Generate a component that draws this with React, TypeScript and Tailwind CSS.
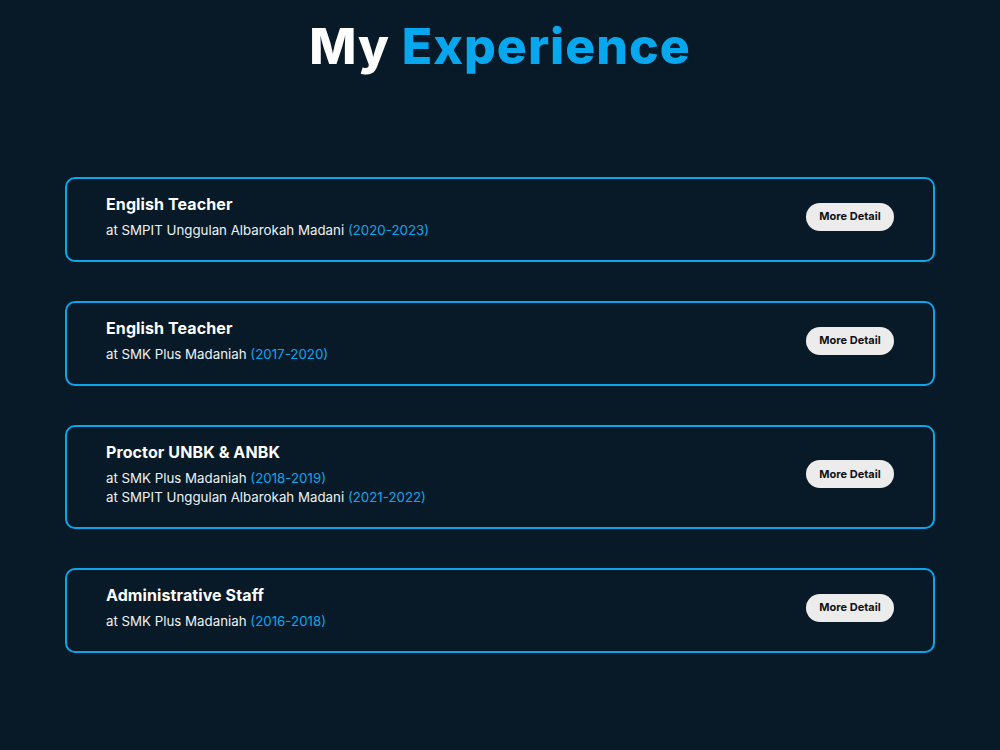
import React from "react";

type Place = { at: string; years: string };
type Job = { title: string; places: Place[] };

const jobs: Job[] = [
  { title: "English Teacher", places: [{ at: "at SMPIT Unggulan Albarokah Madani", years: "(2020-2023)" }] },
  { title: "English Teacher", places: [{ at: "at SMK Plus Madaniah", years: "(2017-2020)" }] },
  {
    title: "Proctor UNBK & ANBK",
    places: [
      { at: "at SMK Plus Madaniah", years: "(2018-2019)" },
      { at: "at SMPIT Unggulan Albarokah Madani", years: "(2021-2022)" },
    ],
  },
  { title: "Administrative Staff", places: [{ at: "at SMK Plus Madaniah", years: "(2016-2018)" }] },
];

function JobCard({ job }: { job: Job }) {
  return (
    <div className="flex items-center justify-between rounded-[10px] border-2 border-[#0aa6ec] pl-[39px] pr-[39px] pt-[13px] pb-[20px]">
      <div>
        <h3 className="text-[16px] font-bold leading-[24px] text-white tracking-[0.1px]">{job.title}</h3>
        <div className="mt-[5px]">
          {job.places.map((p, i) => (
            <p key={i} className="text-[13.3px] leading-[19px] text-[#eef2f5]">
              {p.at} <span className="text-[#0aa6ec]">{p.years}</span>
            </p>
          ))}
        </div>
      </div>
      <button className="h-[28px] w-[88px] rounded-full bg-[#ececec] text-[11px] font-bold text-[#111] mt-[1px]">
        More Detail
      </button>
    </div>
  );
}

export default function App() {
  return (
    <div
      className="min-h-[750px] w-full bg-[#081a28] px-[65px]"
      style={{ fontFamily: "Inter, 'Open Sans', sans-serif" }}
    >
      <h1 className="pt-[12px] text-center text-[50px] font-extrabold leading-[68px] tracking-[1px] text-white">
        My <span className="text-[#05a8ee]">Experience</span>
      </h1>
      <div className="mt-[97px] flex flex-col gap-[39px]">
        {jobs.map((j, i) => (
          <JobCard key={i} job={j} />
        ))}
      </div>
    </div>
  );
}
